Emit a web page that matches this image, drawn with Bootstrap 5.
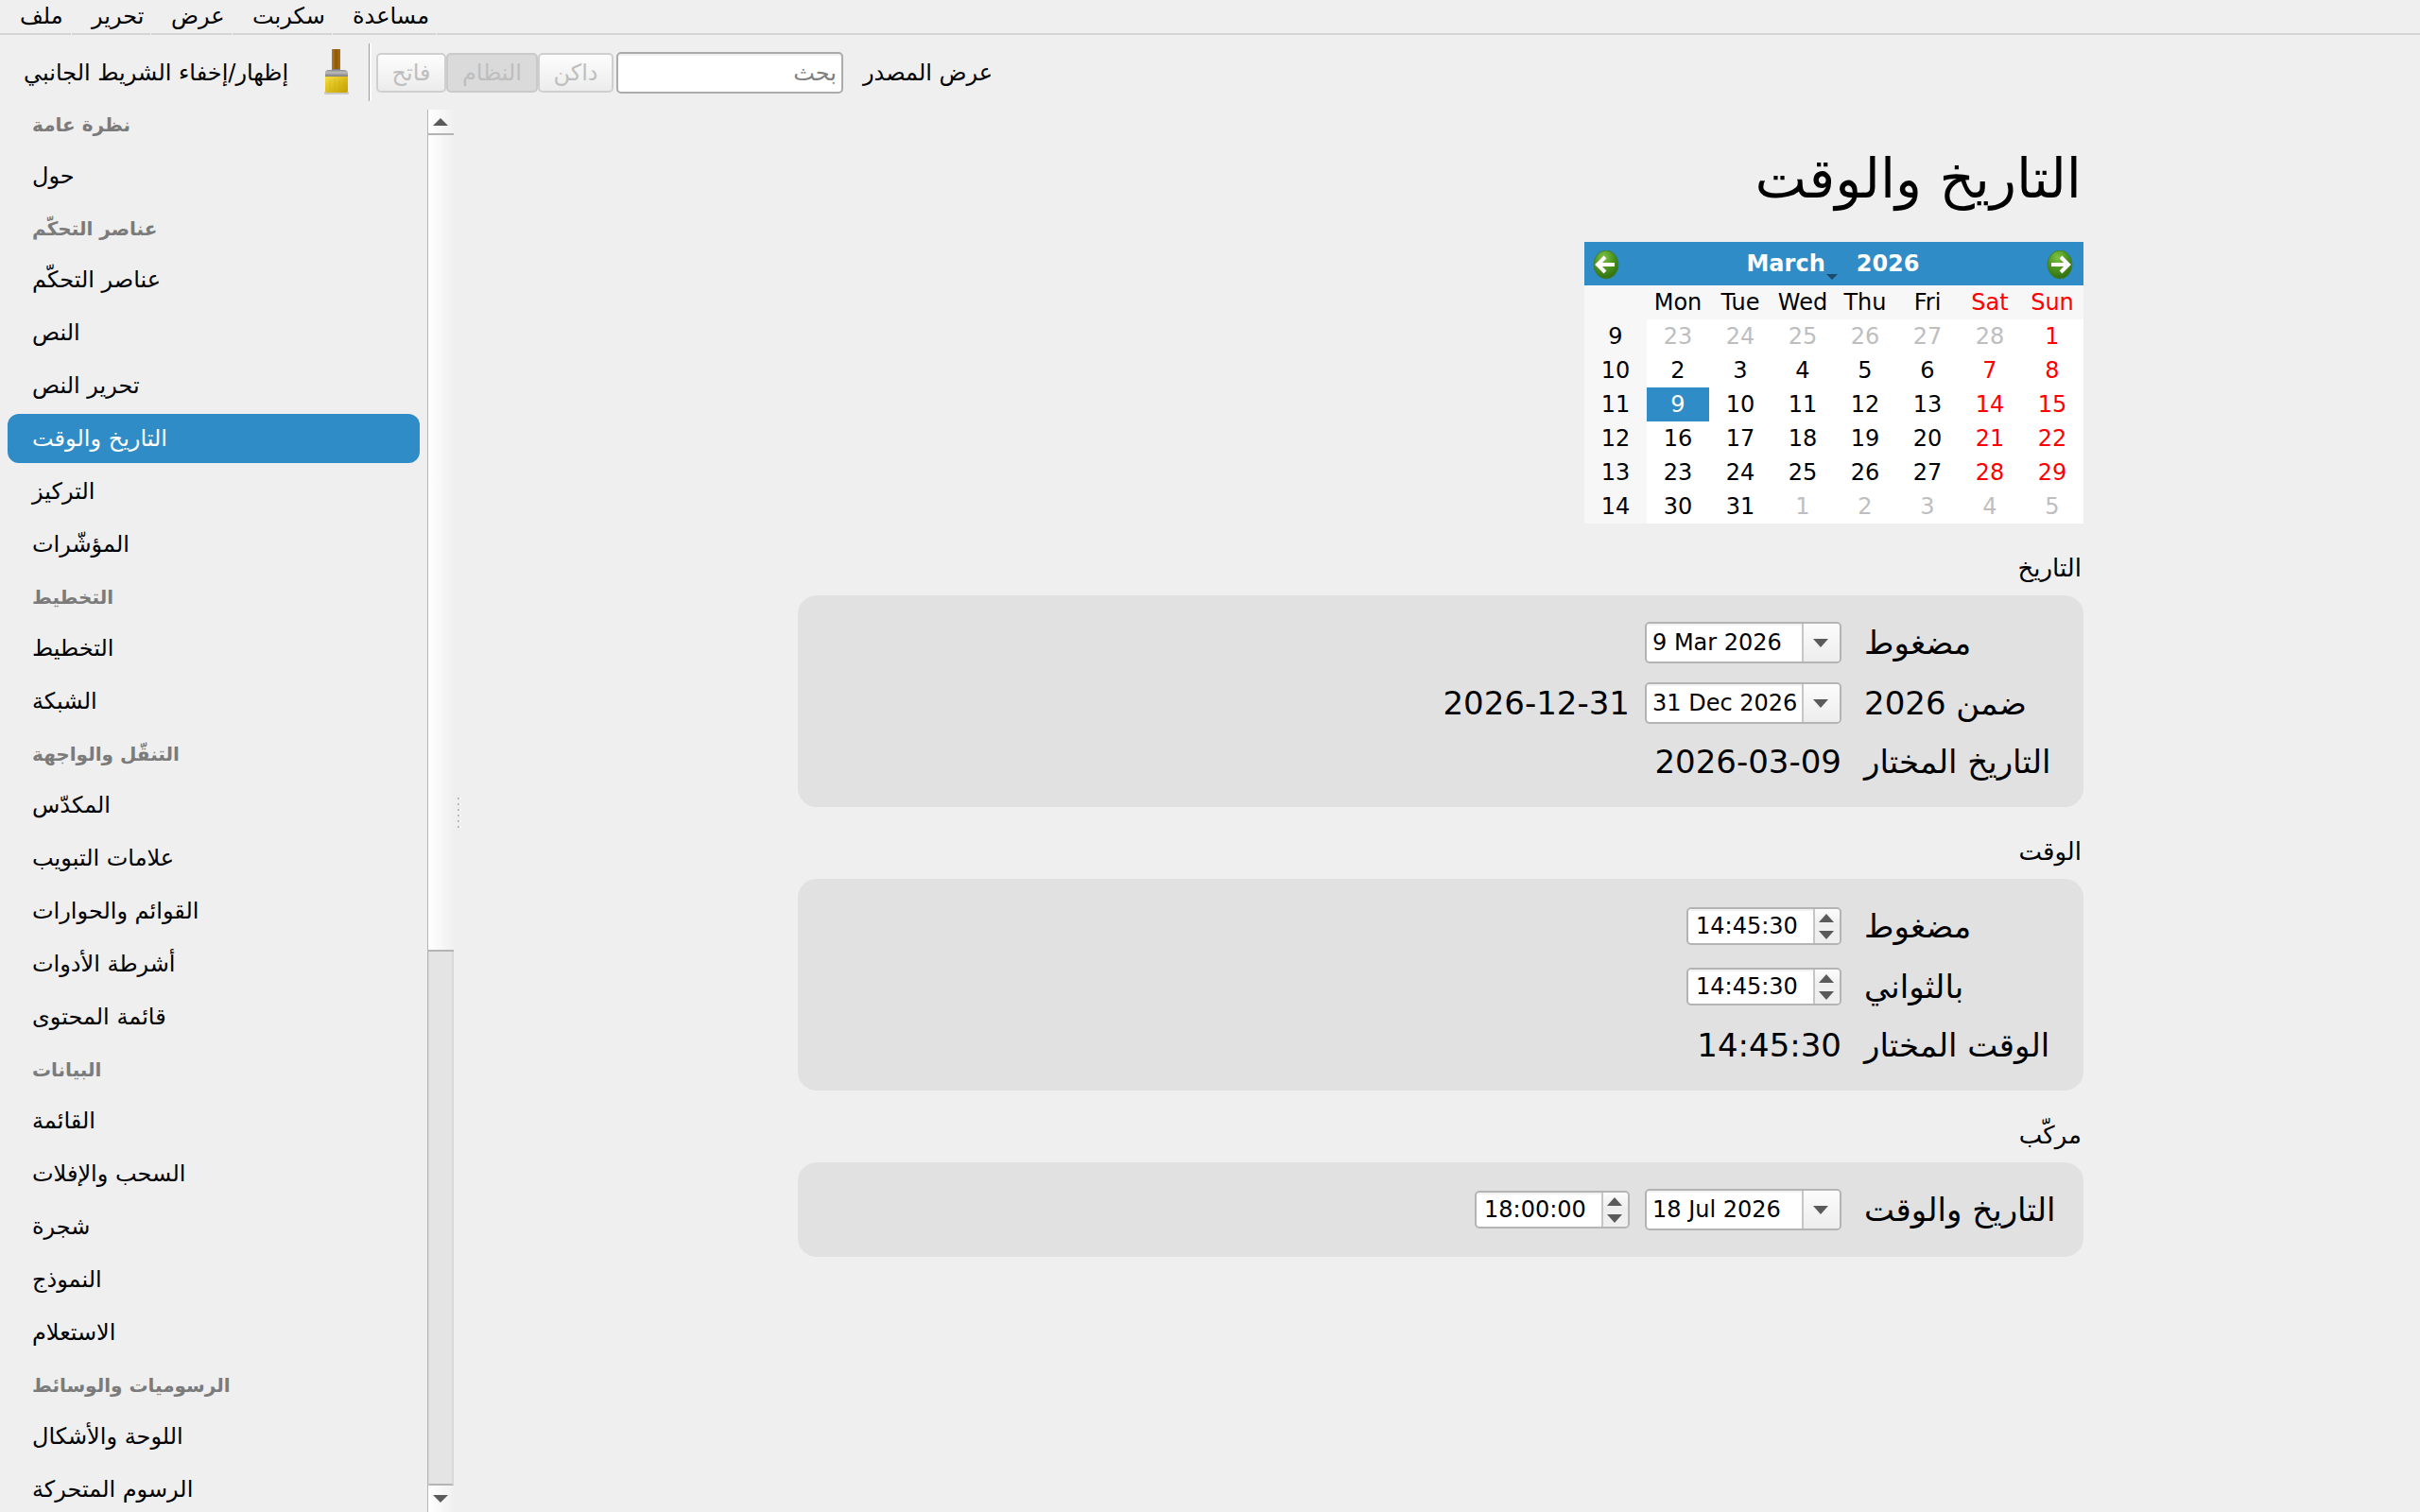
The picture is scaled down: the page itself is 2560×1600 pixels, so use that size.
<!DOCTYPE html>
<html lang="ar">
<head>
<meta charset="utf-8">
<meta name="viewport" content="width=device-width, initial-scale=1">
<title>التاريخ والوقت</title>
<link href="https://cdn.jsdelivr.net/npm/bootstrap@5.3.0/dist/css/bootstrap.min.css" rel="stylesheet">
<style>
:root { --accent: #308cc6; --edge: #b4b4b4; }
body { font: 24px/28px "DejaVu Sans", sans-serif; color: #000; background: #efefef; }
a, a:hover { color: inherit; text-decoration: none; }
button { color: inherit; }

.menu-strip { height: 37px; }
.menu-strip a { padding: 3px 8px 4px 21px; border-bottom: 2px solid #d4d4d4; margin-right: 1px; height: 37px; }
.menu-strip .menu-rest { border-bottom: 2px solid #d4d4d4; }
.mi-1 { width: 75px; } .mi-2 { width: 83px; } .mi-3 { width: 85px; } .mi-4 { width: 105px; } .mi-5 { width: 109px; }

.tool-strip { height: 79px; }
.tool-strip .plain { background: none; border: 0; padding: 0; }
.tool-toggle { margin-left: 25px; width: 280px; }
.brush { margin-left: 32px; width: 40px; height: 50px; }
.brush svg { display: block; }
.tool-sep { width: 3px; height: 61px; border-left: 1px solid #9a9a9a; background: #fff; margin: 0 5px 0 13px; }
.theme-btn { height: 42px; padding: 0; border: 2px solid #cfcfcf; border-radius: 5px; background: linear-gradient(#fdfdfd, #ececec); color: #bebebe; }
.theme-btn.chosen { background: #dadada; border-color: #cacaca; }
.tb-1 { width: 74px; } .tb-2 { width: 97px; } .tb-3 { width: 80px; }
.find-box { width: 240px; height: 44px; border: 2px solid #ababab; border-radius: 5px; background: #fff; padding: 0 5px; margin: 0 21px 0 3px; box-shadow: inset 0 2px #f0f0f0; }
.find-box::placeholder { color: #808080; opacity: 1; }

.side-pane { width: 452px; }
.side-list { padding: 0 8px; margin-top: -12px; }
.side-list h2 { font-size: 20px; line-height: 24px; font-weight: 700; color: #7b7b7b; margin: 0; height: 54px; padding: 16px 26px 0; text-align: left; }
.side-list a { height: 52px; margin: 2px 0; padding: 12px 26px; border-radius: 12px; text-align: left; }
.side-list a.chosen { background: var(--accent); color: #fff; }

.scroll-rail { width: 28px; border-left: 1px solid var(--edge); }
.scroll-rail button { border: 0; padding: 0 2px 0 0; background: linear-gradient(90deg, #fff, #f0f0f0); height: 25px; }
.scroll-rail button:last-child { height: 28px; }
.rail-thumb { flex: 865 0 0; border: solid var(--edge); border-width: 2px 0; background: linear-gradient(90deg, #fff, #f0f0f0); }
.rail-groove { flex: 565 0 0; border: solid #d9d9d9; border-width: 0 2px 0 1px; border-bottom: 2px solid var(--edge); background: #e4e4e4; }
.grip { width: 8px; padding: 4px 4px 0; }
.grip i { display: block; width: 4px; height: 2px; margin: 2px 0; border-left: 2px solid #b8b8b8; background: #fafafa; }

.page-body { max-width: 1360px; padding-top: 38px; }
.page-body h1 { font-size: 58px; line-height: 70px; font-weight: 400; margin: 0 0 32px; padding: 0 2px; }

.cal-box { width: 528px; }
.cal-head { background: var(--accent); color: #fff; height: 46px; font-weight: 700; padding: 0 11px 0 9px; }
.cal-head button { border: 0; background: none; padding: 0; font-weight: 700; }
.cal-head .cal-nav { width: 28px; height: 42px; }
.cal-head svg { display: block; }
.cal-nav svg { margin-top: 4px; }
.cal-title { gap: 17px; }
.cal-month { position: relative; padding-right: 16px !important; }
.cal-month svg { position: absolute; right: 3px; bottom: -3px; }
.cal-grid { width: 100%; table-layout: fixed; background: #fff; }
.cal-grid th, .cal-grid td { height: 36px; padding: 0; text-align: center; font-weight: 400; }
.cal-grid th { background: #f7f7f7; }
.cal-grid .wkend { color: #f00; }
.cal-grid .dim { color: #bebebe; }
.cal-grid .picked { background: var(--accent); color: #fff; }

.group-title { font-size: 26px; line-height: 30px; font-weight: 400; margin: 32px 0 14px; padding: 0 2px; }
.group-box { background: #e1e1e1; border-radius: 20px; padding: 28px 24px; row-gap: 20px; }
.form-line { font-size: 34px; line-height: 40px; column-gap: 16px; }
.form-line:has(.field) { min-height: 44px; }
.form-line > label, .form-line > .cap { width: 208px; margin-left: 8px; text-align: left; }
.field { border: 2px solid var(--edge); border-radius: 5px; background: #fff; overflow: hidden; font-size: 24px; line-height: 28px; }
.field input { flex: 1; min-width: 0; border: 0; padding: 0; background: none; box-shadow: inset 0 2px #f2f2f2; outline: 0; color: #000; }
.field button { border: 0; padding: 0 3px 0 0; background: linear-gradient(#fcfcfc, #ededed); }
.date-field { width: 208px; height: 44px; }
.date-field input { padding-left: 6px; }
.date-field button { width: 40px; border-left: 2px solid #c6c6c6; }
.time-field { width: 164px; height: 40px; }
.time-field input { padding-left: 8px; }
.time-steps { width: 28px; border-left: 2px solid #c6c6c6; }
.field svg, .scroll-rail svg { display: block; margin: auto; }
.time-steps button { flex: 1; padding-right: 2px; }
.time-steps button:last-child { background: #efefef; }
</style>
</head>
<body class="vh-100 d-flex flex-column overflow-hidden">

<nav class="menu-strip d-flex flex-shrink-0">
  <a href="#" class="mi-1">ملف</a><a href="#" class="mi-2">تحرير</a><a href="#" class="mi-3">عرض</a><a href="#" class="mi-4">سكربت</a><a href="#" class="mi-5">مساعدة</a>
  <div class="menu-rest flex-grow-1"></div>
</nav>

<div class="tool-strip d-flex align-items-center flex-shrink-0">
  <button type="button" class="plain tool-toggle text-nowrap">إظهار/إخفاء الشريط الجانبي</button>
  <button type="button" class="plain brush" aria-label="فرشاة">
    <svg width="40" height="50" viewBox="0 0 40 50">
      <defs>
        <linearGradient id="wood"><stop offset="0" stop-color="#b57a2c"/><stop offset=".5" stop-color="#8f5902"/><stop offset="1" stop-color="#a76d22"/></linearGradient>
        <linearGradient id="steel" x2="0" y2="1"><stop offset="0" stop-color="#777"/><stop offset=".4" stop-color="#bbb"/><stop offset="1" stop-color="#707070"/></linearGradient>
        <linearGradient id="paint" x2="1" y2="1"><stop offset="0" stop-color="#f5df45"/><stop offset=".5" stop-color="#dcbd1c"/><stop offset="1" stop-color="#c4a000"/></linearGradient>
      </defs>
      <rect x="6" y="45" width="26" height="3" rx="1" fill="#c9c9c9"/>
      <rect x="14" y="0" width="9" height="24" fill="url(#wood)"/>
      <path d="M7 30v-5q0-3 4-3h3l1-1h7l1 1h3q5 0 5 3v5z" fill="url(#steel)"/>
      <path d="M7 29h24v15q0 2-3 2H10q-3 0-3-2z" fill="url(#paint)"/>
      <path d="M12 33v10M17 32v11M22 33v10M27 32v10" stroke="#c4a000" stroke-opacity=".35"/>
    </svg>
  </button>
  <div class="tool-sep"></div>
  <button type="button" class="theme-btn tb-1" disabled>فاتح</button><button type="button" class="theme-btn chosen tb-2" disabled>النظام</button><button type="button" class="theme-btn tb-3" disabled>داكن</button>
  <input type="search" class="find-box" dir="rtl" placeholder="بحث" aria-label="بحث">
  <button type="button" class="plain">عرض المصدر</button>
</div>

<div class="d-flex flex-grow-1 overflow-hidden">
  <aside class="side-pane flex-shrink-0 overflow-hidden">
    <nav class="side-list d-flex flex-column" dir="rtl">
      <h2>نظرة عامة</h2>
      <a href="#">حول</a>
      <h2>عناصر التحكّم</h2>
      <a href="#">عناصر التحكّم</a>
      <a href="#">النص</a>
      <a href="#">تحرير النص</a>
      <a href="#" class="chosen" aria-current="page">التاريخ والوقت</a>
      <a href="#">التركيز</a>
      <a href="#">المؤشّرات</a>
      <h2>التخطيط</h2>
      <a href="#">التخطيط</a>
      <a href="#">الشبكة</a>
      <h2>التنقّل والواجهة</h2>
      <a href="#">المكدّس</a>
      <a href="#">علامات التبويب</a>
      <a href="#">القوائم والحوارات</a>
      <a href="#">أشرطة الأدوات</a>
      <a href="#">قائمة المحتوى</a>
      <h2>البيانات</h2>
      <a href="#">القائمة</a>
      <a href="#">السحب والإفلات</a>
      <a href="#">شجرة</a>
      <a href="#">النموذج</a>
      <a href="#">الاستعلام</a>
      <h2>الرسوميات والوسائط</h2>
      <a href="#">اللوحة والأشكال</a>
      <a href="#">الرسوم المتحركة</a>
    </nav>
  </aside>
  <div class="scroll-rail d-flex flex-column flex-shrink-0">
    <button type="button" aria-label="أعلى"><svg width="16" height="8"><path d="M0 8 8 0l8 8z" fill="#5a5a5a"/></svg></button>
    <div class="rail-thumb"></div>
    <div class="rail-groove"></div>
    <button type="button" aria-label="أسفل"><svg width="16" height="8"><path d="M0 0h16L8 8z" fill="#5a5a5a"/></svg></button>
  </div>
  <div class="grip d-flex flex-column justify-content-center flex-shrink-0"><i></i><i></i><i></i><i></i><i></i><i></i></div>

  <main class="flex-grow-1" dir="rtl">
    <div class="page-body mx-auto">
      <h1>التاريخ والوقت</h1>

      <div class="cal-box" dir="ltr">
        <div class="cal-head d-flex justify-content-between align-items-center">
          <button type="button" class="cal-nav" aria-label="الشهر السابق">
            <svg width="28" height="32" viewBox="0 0 28 32"><defs><radialGradient id="leaf" cx=".4" cy=".25" r=".8"><stop offset="0" stop-color="#7cc242"/><stop offset=".5" stop-color="#4c9520"/><stop offset="1" stop-color="#2c6a0c"/></radialGradient></defs><ellipse cx="14" cy="15" rx="13" ry="15" fill="url(#leaf)" stroke="#3c7f3a"/><path d="M13 7 5 15l8 8M6 15h17" fill="none" stroke="#fff" stroke-width="4"/></svg>
          </button>
          <div class="cal-title d-flex">
            <button type="button" class="cal-month">March<svg width="12" height="6"><path d="M0 0h12L6 6z" fill="#1c4a68"/></svg></button>
            <button type="button">2026</button>
          </div>
          <button type="button" class="cal-nav" aria-label="الشهر التالي">
            <svg width="28" height="32" viewBox="0 0 28 32"><ellipse cx="14" cy="15" rx="13" ry="15" fill="url(#leaf)" stroke="#3c7f3a"/><path d="m15 7 8 8-8 8M22 15H5" fill="none" stroke="#fff" stroke-width="4"/></svg>
          </button>
        </div>
        <table class="cal-grid">
          <thead><tr><th></th><th>Mon</th><th>Tue</th><th>Wed</th><th>Thu</th><th>Fri</th><th class="wkend">Sat</th><th class="wkend">Sun</th></tr></thead>
          <tbody>
            <tr><th>9</th><td class="dim">23</td><td class="dim">24</td><td class="dim">25</td><td class="dim">26</td><td class="dim">27</td><td class="dim">28</td><td class="wkend">1</td></tr>
            <tr><th>10</th><td>2</td><td>3</td><td>4</td><td>5</td><td>6</td><td class="wkend">7</td><td class="wkend">8</td></tr>
            <tr><th>11</th><td class="picked">9</td><td>10</td><td>11</td><td>12</td><td>13</td><td class="wkend">14</td><td class="wkend">15</td></tr>
            <tr><th>12</th><td>16</td><td>17</td><td>18</td><td>19</td><td>20</td><td class="wkend">21</td><td class="wkend">22</td></tr>
            <tr><th>13</th><td>23</td><td>24</td><td>25</td><td>26</td><td>27</td><td class="wkend">28</td><td class="wkend">29</td></tr>
            <tr><th>14</th><td>30</td><td>31</td><td class="dim">1</td><td class="dim">2</td><td class="dim">3</td><td class="dim">4</td><td class="dim">5</td></tr>
          </tbody>
        </table>
      </div>

      <h2 class="group-title">التاريخ</h2>
      <section class="group-box d-flex flex-column">
        <div class="form-line d-flex align-items-center">
          <label for="date-compact">مضغوط</label>
          <div class="field date-field d-flex" dir="ltr"><input id="date-compact" type="text" value="9 Mar 2026"><button type="button" aria-label="اختيار التاريخ"><svg width="16" height="9"><path d="M0 0h16L8 9z" fill="#5a5a5a"/></svg></button></div>
        </div>
        <div class="form-line d-flex align-items-center">
          <label for="date-range">ضمن 2026</label>
          <div class="field date-field d-flex" dir="ltr"><input id="date-range" type="text" value="31 Dec 2026"><button type="button" aria-label="اختيار التاريخ"><svg width="16" height="9"><path d="M0 0h16L8 9z" fill="#5a5a5a"/></svg></button></div>
          <output for="date-range" dir="ltr">2026-12-31</output>
        </div>
        <div class="form-line d-flex align-items-center">
          <span class="cap">التاريخ المختار</span>
          <output for="date-compact" dir="ltr">2026-03-09</output>
        </div>
      </section>

      <h2 class="group-title">الوقت</h2>
      <section class="group-box d-flex flex-column">
        <div class="form-line d-flex align-items-center">
          <label for="time-compact">مضغوط</label>
          <div class="field time-field d-flex" dir="ltr"><input id="time-compact" type="text" value="14:45:30"><div class="time-steps d-flex flex-column"><button type="button" aria-label="زيادة"><svg width="16" height="9"><path d="M0 9 8 0l8 9z" fill="#5a5a5a"/></svg></button><button type="button" aria-label="إنقاص"><svg width="16" height="9"><path d="M0 0h16L8 9z" fill="#5a5a5a"/></svg></button></div></div>
        </div>
        <div class="form-line d-flex align-items-center">
          <label for="time-seconds">بالثواني</label>
          <div class="field time-field d-flex" dir="ltr"><input id="time-seconds" type="text" value="14:45:30"><div class="time-steps d-flex flex-column"><button type="button" aria-label="زيادة"><svg width="16" height="9"><path d="M0 9 8 0l8 9z" fill="#5a5a5a"/></svg></button><button type="button" aria-label="إنقاص"><svg width="16" height="9"><path d="M0 0h16L8 9z" fill="#5a5a5a"/></svg></button></div></div>
        </div>
        <div class="form-line d-flex align-items-center">
          <span class="cap">الوقت المختار</span>
          <output for="time-compact" dir="ltr">14:45:30</output>
        </div>
      </section>

      <h2 class="group-title">مركّب</h2>
      <section class="group-box d-flex flex-column">
        <div class="form-line d-flex align-items-center">
          <label for="both-date">التاريخ والوقت</label>
          <div class="field date-field d-flex" dir="ltr"><input id="both-date" type="text" value="18 Jul 2026"><button type="button" aria-label="اختيار التاريخ"><svg width="16" height="9"><path d="M0 0h16L8 9z" fill="#5a5a5a"/></svg></button></div>
          <div class="field time-field d-flex" dir="ltr"><input type="text" value="18:00:00" aria-label="الوقت"><div class="time-steps d-flex flex-column"><button type="button" aria-label="زيادة"><svg width="16" height="9"><path d="M0 9 8 0l8 9z" fill="#5a5a5a"/></svg></button><button type="button" aria-label="إنقاص"><svg width="16" height="9"><path d="M0 0h16L8 9z" fill="#5a5a5a"/></svg></button></div></div>
        </div>
      </section>
    </div>
  </main>
</div>
<script src="https://cdn.jsdelivr.net/npm/bootstrap@5.3.0/dist/js/bootstrap.bundle.min.js"></script>
</body>
</html>
